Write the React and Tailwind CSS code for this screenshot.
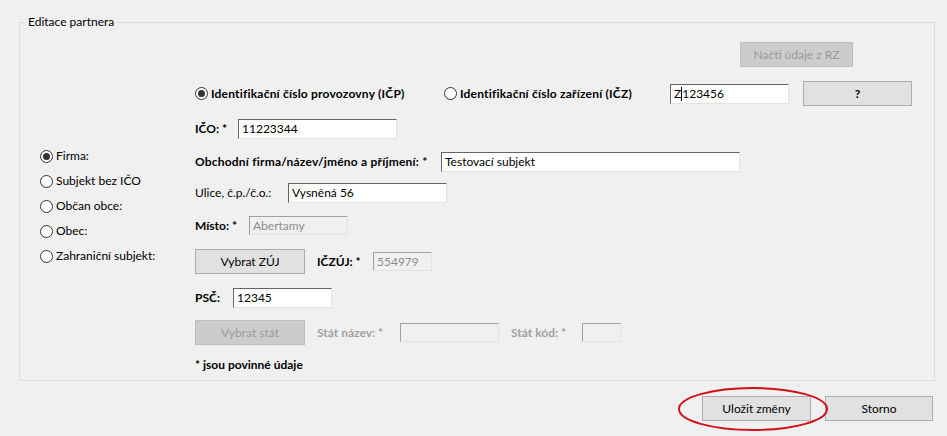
const FONT = { fontFamily: "Lato, 'Open Sans', sans-serif" };

function Radio({ checked, bold, children, className = "" }) {
  return (
    <label className={`flex items-center gap-[3px] ${bold ? "font-bold tracking-[0.2px]" : ""} ${className}`}>
      <span className="flex h-[13px] w-[13px] shrink-0 items-center justify-center rounded-full border border-[#333] bg-white">
        {checked && <span className="h-[7px] w-[7px] rounded-full bg-[#333]" />}
      </span>
      <span>{children}</span>
    </label>
  );
}

function Input({ value, width, disabled, height = "h-[20px]", caret }) {
  return (
    <div
      className={`${width} ${height} flex items-center border border-r-[#e3e3e3] border-b-[#e3e3e3] pl-[3px] ${
        disabled
          ? "border-l-[#a0a0a0] border-t-[#a0a0a0] bg-[#f0f0f0] text-[#8d8d8d]"
          : "border-l-[#646464] border-t-[#646464] bg-white text-black"
      }`}
    >
      {caret ? (
        <>
          {value[0]}
          <span className="h-[14px] w-px bg-black" />
          {value.slice(1)}
        </>
      ) : (
        value
      )}
    </div>
  );
}

function Button({ children, width, disabled, bold, className = "" }) {
  return (
    <div
      className={`${width} flex h-[25px] shrink-0 items-center justify-center border ${
        disabled ? "border-[#bfbfbf] bg-[#cccccc] text-[#9a9a9a]" : "border-[#adadad] bg-[#e1e1e1] text-black"
      } ${bold ? "font-bold" : ""} ${className}`}
    >
      {children}
    </div>
  );
}

export default function App() {
  return (
    <div className="h-[436px] w-[947px] overflow-hidden bg-[#f0f0f0] pt-[22px] text-[12px] text-black" style={FONT}>
      <div className="relative ml-[19px] h-[359px] w-[916px] border border-[#dcdcdc]">
        <span className="absolute left-[5px] top-[-9px] bg-[#f0f0f0] px-[3px] leading-[16px]">Editace partnera</span>

        <div className="flex justify-end pr-[81px] pt-[19px]">
          <Button width="w-[113px]" disabled>
            Načti údaje z RZ
          </Button>
        </div>

        <div className="flex">
          {/* left: partner type */}
          <div className="w-[175px] pl-[20px] pt-[81px]">
            <div className="flex flex-col gap-[9px] leading-[16px]">
              <Radio checked>Firma:</Radio>
              <Radio>Subjekt bez IČO</Radio>
              <Radio>Občan obce:</Radio>
              <Radio>Obec:</Radio>
              <Radio>Zahraniční subjekt:</Radio>
            </div>
          </div>

          {/* right: form */}
          <div className="flex flex-col pt-[14px]">
            <div className="flex h-[25px] items-center">
              <Radio checked bold className="w-[249px]">
                Identifikační číslo provozovny (IČP)
              </Radio>
              <Radio bold className="w-[226px]">
                Identifikační číslo zařízení (IČZ)
              </Radio>
              <Input value="Z123456" width="w-[119px]" caret />
              <Button width="w-[109px]" bold className="ml-[14px]">
                ?
              </Button>
            </div>

            <div className="mt-[13px] flex items-center">
              <span className="w-[43px] font-bold">IČO: *</span>
              <Input value="11223344" width="w-[159px]" />
            </div>

            <div className="mt-[13px] flex items-center">
              <span className="w-[246px] font-bold tracking-[0.2px]">Obchodní firma/název/jméno a příjmení: *</span>
              <Input value="Testovací subjekt" width="w-[299px]" />
            </div>

            <div className="mt-[11px] flex items-center">
              <span className="w-[93px]">Ulice, č.p./č.o.:</span>
              <Input value="Vysněná 56" width="w-[159px]" />
            </div>

            <div className="mt-[13px] flex items-center">
              <span className="w-[54px] font-bold">Místo: *</span>
              <Input value="Abertamy" width="w-[99px]" height="h-[19px]" disabled />
            </div>

            <div className="mt-[14px] flex items-center">
              <Button width="w-[110px]">Vybrat ZÚJ</Button>
              <span className="ml-[12px] w-[56px] font-bold">IČZÚJ: *</span>
              <Input value="554979" width="w-[59px]" height="h-[19px]" disabled />
            </div>

            <div className="mt-[14px] flex items-center">
              <span className="w-[38px] font-bold">PSČ:</span>
              <Input value="12345" width="w-[99px]" />
            </div>

            <div className="mt-[12px] flex items-center">
              <Button width="w-[110px]" disabled>
                Vybrat stát
              </Button>
              <span className="ml-[12px] w-[83px] font-bold text-[#a0a0a0]">Stát název: *</span>
              <Input value="" width="w-[99px]" height="h-[19px]" disabled />
              <span className="ml-[12px] w-[71px] font-bold text-[#a0a0a0]">Stát kód: *</span>
              <Input value="" width="w-[39px]" height="h-[19px]" disabled />
            </div>

            <div className="mt-[12px] font-bold leading-[16px]">* jsou povinné údaje</div>
          </div>
        </div>
      </div>

      <div className="relative mt-[15px] flex justify-end gap-[14px] pr-[14px]">
        <Button width="w-[109px]">Uložit změny</Button>
        <Button width="w-[108px]">Storno</Button>
        <svg className="pointer-events-none absolute left-[677px] top-[-10px]" width="152" height="46" viewBox="0 0 152 46">
          <ellipse cx="76" cy="23" rx="74" ry="21" fill="none" stroke="#d0101a" strokeWidth="2" />
        </svg>
      </div>
    </div>
  );
}
